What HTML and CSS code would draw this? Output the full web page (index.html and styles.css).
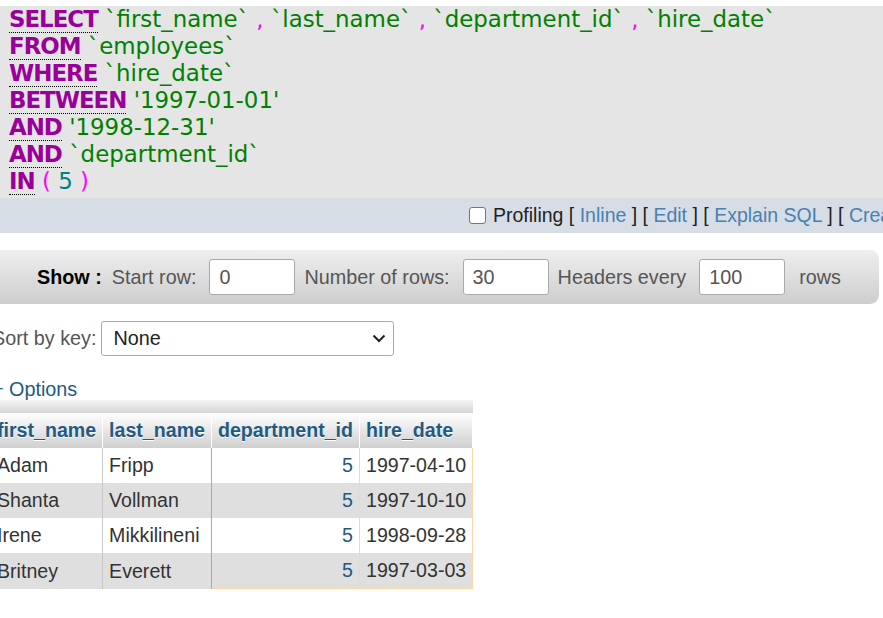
FILE: index.html
```html
<!DOCTYPE html>
<html lang="en">
<head>
<meta charset="utf-8">
<title>SQL result</title>
<link rel="stylesheet" href="styles.css">
</head>
<body>
<div class="sql"><div class="ln"><span class="kw">SELECT</span> <span class="id">`first_name`</span> <span class="pn">,</span> <span class="id">`last_name`</span> <span class="pn">,</span> <span class="id">`department_id`</span> <span class="pn">,</span> <span class="id">`hire_date`</span></div><div class="ln"><span class="kw">FROM</span> <span class="id">`employees`</span></div><div class="ln"><span class="kw">WHERE</span> <span class="id">`hire_date`</span></div><div class="ln"><span class="kw">BETWEEN</span> <span class="str">'1997-01-01'</span></div><div class="ln"><span class="kw">AND</span> <span class="str">'1998-12-31'</span></div><div class="ln"><span class="kw">AND</span> <span class="id">`department_id`</span></div><div class="ln"><span class="kw">IN</span> <span class="pn">(</span> <span class="num">5</span> <span class="pn">)</span></div></div>
<div class="tools">
  <span class="cb"></span><span class="txt">Profiling [ <a class="lk">Inline</a> ] [ <a class="lk">Edit</a> ] [ <a class="lk">Explain SQL</a> ] [ <a class="lk">Create PHP code</a> ] [ <a class="lk">Refresh</a> ]</span>
</div>
<div class="navbar">
  <b class="show">Show :</b>
  <span class="lbl">Start row:</span>
  <span class="inp">0</span>
  <span class="lbl">Number of rows:</span>
  <span class="inp">30</span>
  <span class="lbl">Headers every</span>
  <span class="inp">100</span>
  <span class="lbl last">rows</span>
</div>
<div class="sortrow">
  <span class="sortlbl">Sort by key:</span>
  <span class="select"><span>None</span><svg class="chev" width="14" height="9" viewBox="0 0 14 9"><polyline points="1.5,1.5 7,7 12.5,1.5" fill="none" stroke="#222" stroke-width="2"/></svg></span>
</div>
<div class="options"><span class="plus">+</span> Options</div>
<div class="results">
  <div class="tstrip"></div>
  <table class="data">
    <thead>
      <tr><th>first_name</th><th>last_name</th><th>department_id</th><th>hire_date</th></tr>
    </thead>
    <tbody>
      <tr class="odd"><td class="c1">Adam</td><td class="c2">Fripp</td><td class="cond num">5</td><td class="cond">1997-04-10</td></tr>
      <tr class="even"><td class="c1">Shanta</td><td class="c2">Vollman</td><td class="cond num">5</td><td class="cond">1997-10-10</td></tr>
      <tr class="odd"><td class="c1">Irene</td><td class="c2">Mikkilineni</td><td class="cond num">5</td><td class="cond">1998-09-28</td></tr>
      <tr class="even last"><td class="c1">Britney</td><td class="c2">Everett</td><td class="cond num">5</td><td class="cond">1997-03-03</td></tr>
    </tbody>
  </table>
</div>
</body>
</html>
```

FILE: styles.css
```css
html, body {
  margin: 0;
  padding: 0;
  background: #fff;
}
body {
  font-family: "Liberation Sans", Arial, sans-serif;
  font-size: 19.8px;
  color: #333;
  overflow: hidden;
  width: 883px;
  height: 618px;
}

/* SQL box */
.sql {
  margin-top: 6px;
  height: 192px;
  box-sizing: border-box;
  background: #e5e5e5;
  padding-left: 9px;
  font-family: "DejaVu Sans", Verdana, sans-serif;
  font-size: 22.9px;
  line-height: 27px;
  white-space: pre;
  overflow: hidden;
}
.kw {
  color: #990099;
  font-weight: bold;
  letter-spacing: -1px;
  border-bottom: 1px dotted #000;
}
.id, .str { color: #008000; }
.pn { color: #ff00ff; }
.num { color: #008080; }

/* tools bar */
.tools {
  height: 35px;
  background: #d6dde5;
  display: flex;
  align-items: center;
  padding-left: 469px;
  white-space: nowrap;
  overflow: hidden;
  color: #222;
  font-size: 19.5px;
}
.cb {
  flex: none;
  width: 15px;
  height: 15px;
  border: 1px solid #767676;
  border-radius: 3px;
  background: #fff;
  margin-right: 7px;
}
.lk { color: #4a80b4; }

/* navigation bar */
.navbar {
  margin-top: 17px;
  margin-left: -10px;
  margin-right: 4px;
  height: 54px;
  border-radius: 0 9px 9px 0;
  background: linear-gradient(#efefef, #cdcdcd);
  display: flex;
  align-items: center;
  padding-left: 47px;
  color: #555;
  white-space: nowrap;
}
.show {
  color: #000;
  margin-right: 10px;
}
.inp {
  box-sizing: border-box;
  width: 86px;
  height: 36px;
  border: 1px solid #aaa;
  border-radius: 3px;
  background: #fff;
  padding-left: 9px;
  line-height: 34px;
  color: #555;
  margin: 0 9px 0 13px;
}
.lbl.last { margin-left: 5px; }

/* sort by key */
.sortrow {
  margin-top: 17px;
  margin-left: -8px;
  display: flex;
  align-items: center;
  height: 35px;
  color: #555;
}
.sortlbl { margin-right: 5px; }
.select {
  box-sizing: border-box;
  width: 293px;
  height: 35px;
  border: 1px solid #aaa;
  border-radius: 3px;
  background: #fff;
  display: flex;
  align-items: center;
  justify-content: space-between;
  padding: 0 7px 0 11px;
  color: #222;
}
.chev { display: block; }

/* options */
.options {
  margin-top: 22px;
  margin-left: -8px;
  line-height: 22px;
  color: #235a81;
}
.plus { color: #235a81; }

/* results table */
.results {
  width: max-content;
  margin-left: -9px;
  font-size: 19.6px;
}
.tstrip {
  height: 13px;
  background: linear-gradient(#f3f3f3, #d6d6d6);
}
.data {
  border-collapse: separate;
  border-spacing: 0;
}
.data th {
  text-align: left;
  font-weight: bold;
  color: #235a81;
  background: linear-gradient(#fff, #cfcfcf);
  padding: 5px 6px 6px;
  line-height: 24px;
  border-right: 1px solid #fff;
  text-shadow: 0 1px 0 #fff;
}
.data td {
  padding: 5px 6px;
  line-height: 25px;
  color: #333;
  white-space: nowrap;
}
.data tr.odd td { background: #fff; }
.data tr.even td { background: #dfdfdf; }
.data td.c1 { border-right: 1px solid #c8c8c8; }
.data td.c2 { border-right: 1px solid #aaa; }
.data td.cond { border-right: 1px solid #fbd7a6; }
.data tr.last td.cond { border-bottom: 1px solid #fbd7a6; }
.data td.num {
  text-align: right;
  color: #235a81;
}
```
